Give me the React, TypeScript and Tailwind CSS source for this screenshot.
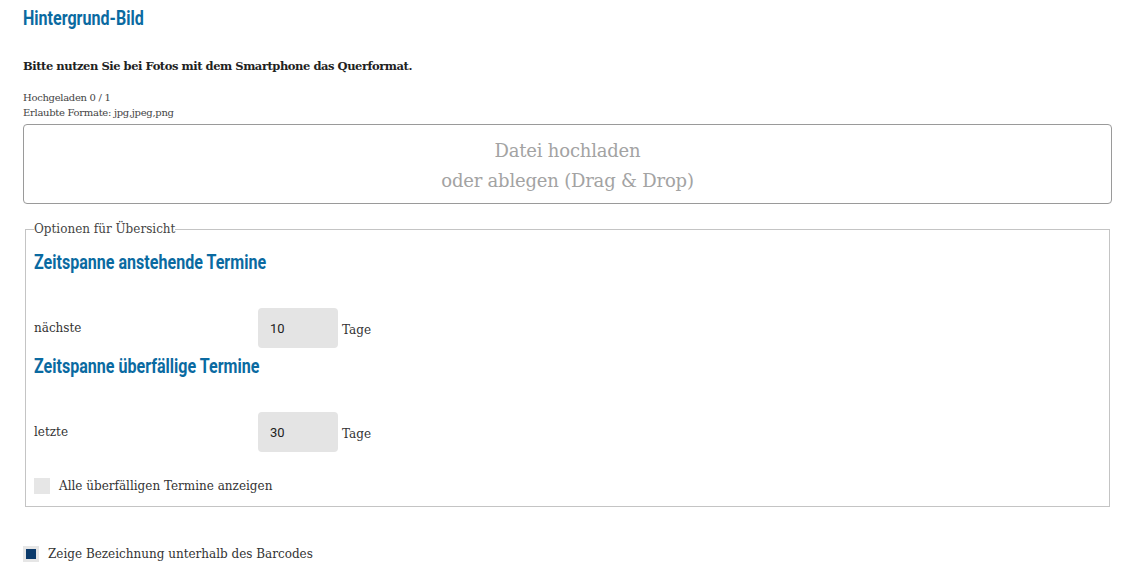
import { useState } from "react";

const heading =
  "origin-left scale-x-[0.765] whitespace-nowrap font-['Roboto',sans-serif] font-bold text-[21px] leading-[24px] text-[#0a6aa1]";

function NumberRow({ label, value }: { label: string; value: string }) {
  return (
    <div className="flex items-center">
      <span className="w-[224px] text-[12px]">{label}</span>
      <div className="w-[80px] h-[40px] rounded-[4px] bg-[#e4e4e4] flex items-center pl-[12px] pt-[2px] font-['Roboto',sans-serif] text-[13px] text-[#222]">
        {value}
      </div>
      <span className="ml-[4px] text-[12px] pt-[3px]">Tage</span>
    </div>
  );
}

export default function App() {
  const [showAll, setShowAll] = useState(false);
  const [showLabel, setShowLabel] = useState(true);

  return (
    <div className="pl-[23px] pr-[21px] pt-[6px] text-[#333] font-['DejaVu_Serif','Roboto_Slab',serif] bg-white min-h-[572px]">
      <h2 className={heading}>Hintergrund-Bild</h2>

      <p className="mt-[27px] text-[11.5px] leading-[18px] font-bold text-[#222] tracking-[-0.45px]">
        Bitte nutzen Sie bei Fotos mit dem Smartphone das Querformat.
      </p>

      <div className="mt-[15px] text-[10px] leading-[15px] text-[#444] tracking-[-0.3px]">
        <div>Hochgeladen 0 / 1</div>
        <div>Erlaubte Formate: jpg,jpeg,png</div>
      </div>

      <button className="mt-[4px] w-full h-[80px] rounded-[4px] border border-[#9a9a9a] flex flex-col items-center justify-center pt-[3px] text-[18px] leading-[30px] text-[#a3a3a3] tracking-[-0.2px]">
        <span>Datei hochladen</span>
        <span>oder ablegen (Drag &amp; Drop)</span>
      </button>

      <fieldset className="mt-[17px] mx-[2px] border border-[#c4c4c4] pl-[8px] pr-[8px] pb-[11px]">
        <legend className="text-[12px] leading-[16px] text-[#444]">Optionen für Übersicht</legend>

        <h3 className={`${heading} mt-[13px]`}>Zeitspanne anstehende Termine</h3>
        <div className="mt-[34px]">
          <NumberRow label="nächste" value="10" />
        </div>

        <h3 className={`${heading} mt-[6px]`}>Zeitspanne überfällige Termine</h3>
        <div className="mt-[34px]">
          <NumberRow label="letzte" value="30" />
        </div>

        <label className="mt-[25px] flex items-center gap-[9px] text-[12px] cursor-pointer">
          <span
            className="w-[16px] h-[16px] bg-[#e6e6e6] flex items-center justify-center"
            onClick={() => setShowAll(!showAll)}
          >
            {showAll && <span className="w-[10px] h-[10px] bg-[#0b3a6b]" />}
          </span>
          Alle überfälligen Termine anzeigen
        </label>
      </fieldset>

      <label className="mt-[38px] flex items-center gap-[9px] text-[12px] cursor-pointer">
        <span
          className="w-[16px] h-[16px] bg-[#e6e6e6] flex items-center justify-center"
          onClick={() => setShowLabel(!showLabel)}
        >
          {showLabel && <span className="w-[10px] h-[10px] bg-[#0b3a6b]" />}
        </span>
        Zeige Bezeichnung unterhalb des Barcodes
      </label>
    </div>
  );
}
